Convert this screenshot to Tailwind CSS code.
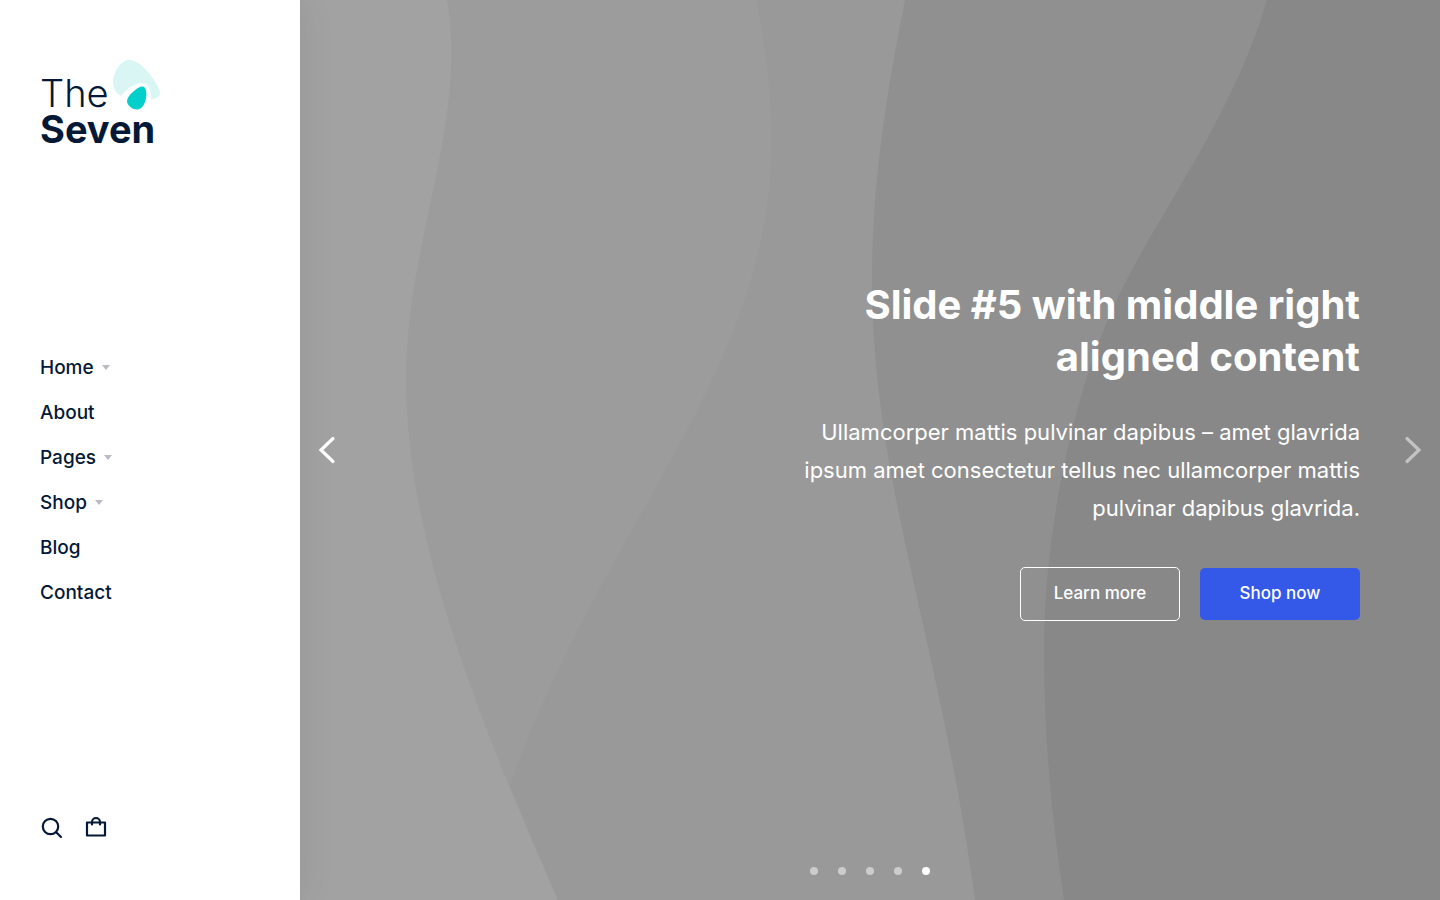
<!DOCTYPE html>
<html lang="en">
<head>
  <meta charset="UTF-8" />
  <meta name="viewport" content="width=device-width, initial-scale=1.0" />
  <title>The Seven</title>
  <script src="https://cdn.jsdelivr.net/npm/@tailwindcss/browser@4"></script>
</head>
<body class="flex min-h-screen bg-white font-['Inter','Liberation_Sans',sans-serif] text-[#051937]">

  <!-- Side header -->
  <header class="relative z-10 flex w-[300px] shrink-0 flex-col justify-between bg-white px-10 pt-[60px] pb-[60px] shadow-[0_0_36px_rgba(0,0,0,0.08)]">
    <a href="#" class="relative block h-[84px] w-[120px] pt-[15px] text-[38px] leading-9">
      <span class="block font-light">The</span>
      <span class="block font-bold">Seven</span>
      <svg class="absolute top-0 right-0 h-[50px] w-12" viewBox="0 0 48 50" aria-hidden="true">
        <path fill="#d9f5f4" d="M9 36C4 34 1 28 1 21C2 11 9 0 17 0C23 0 29 4 35 11C41 18 48 28 48 33C48 37 44 39 39 39C39 32 38 24 31 23C24 22 14 29 9 36Z" />
        <path fill="#05cfca" d="M31 26.5C34 27 35 33 34 38C33 44 30 49 26 49.5C21 50 16 46 15 42C15 38 18 34 22 31C25 28 29 26 31 26.5Z" />
      </svg>
    </a>

    <nav class="text-[19px] leading-[45px] font-medium">
      <ul>
        <li><a href="#" class="flex items-center gap-2">Home
          <svg class="h-[5px] w-2" viewBox="0 0 8 5"><path fill="#b8bcc2" d="M0 0H8L4 5Z" /></svg></a></li>
        <li><a href="#">About</a></li>
        <li><a href="#" class="flex items-center gap-2">Pages
          <svg class="h-[5px] w-2" viewBox="0 0 8 5"><path fill="#b8bcc2" d="M0 0H8L4 5Z" /></svg></a></li>
        <li><a href="#" class="flex items-center gap-2">Shop
          <svg class="h-[5px] w-2" viewBox="0 0 8 5"><path fill="#b8bcc2" d="M0 0H8L4 5Z" /></svg></a></li>
        <li><a href="#">Blog</a></li>
        <li><a href="#">Contact</a></li>
      </ul>
    </nav>

    <div class="flex gap-5">
      <button type="button" aria-label="Search">
        <svg class="size-6" viewBox="0 0 24 24" fill="none" stroke="currentColor" stroke-width="2.2" stroke-linecap="round">
          <circle cx="10.5" cy="10.5" r="7.7" />
          <path d="M16.5 16.5L21 21" />
        </svg>
      </button>
      <a href="#" aria-label="Cart">
        <svg class="size-6" viewBox="0 0 24 24" fill="none" stroke="currentColor" stroke-width="2.2" stroke-linecap="round" stroke-linejoin="round">
          <path d="M3 6.5H21V19.5H3Z" />
          <path d="M8 8.5V6A4 4 0 0 1 16 6V8.5" />
        </svg>
      </a>
    </div>
  </header>

  <!-- Slider -->
  <main class="relative flex grow items-center justify-end overflow-hidden bg-[#a2a2a2] px-20 text-white">
    <svg class="absolute inset-0 h-full w-full" viewBox="0 0 1140 900" preserveAspectRatio="none" aria-hidden="true">
      <path fill="#9c9c9c" d="M147 0C168 125 106 240 106 380C106 535 176 715 258 900H1140V0Z" />
      <path fill="#999999" d="M456 0C475 90 475 170 463 230C430 410 290 560 210 785L258 900H1140V0Z" />
      <path fill="#909090" d="M605 0C586 95 572 185 572 280C572 480 640 640 675 900H1140V0Z" />
      <path fill="#888888" d="M967 0C930 125 854 217 812 310C770 405 744 540 744 650C744 740 752 820 764 900H1140V0Z" />
    </svg>

    <section class="relative flex w-[580px] flex-col items-end text-right">
      <h2 class="text-[40px] leading-[52px] font-bold">Slide #5 with middle right aligned content</h2>
      <p class="mt-[30px] text-[22px] leading-[38px]">Ullamcorper mattis pulvinar dapibus – amet glavrida ipsum amet consectetur tellus nec ullamcorper mattis pulvinar dapibus glavrida.</p>
      <div class="mt-10 flex items-center gap-5 text-[17px] font-medium">
        <button type="button" class="h-[54px] w-40 rounded-[5px] border border-white">Learn more</button>
        <button type="button" class="h-[52px] w-40 rounded-[5px] bg-[#3459e9]">Shop now</button>
      </div>
    </section>

    <button type="button" aria-label="Previous slide" class="absolute top-1/2 left-[18px] -translate-y-1/2">
      <svg class="h-7 w-[18px]" viewBox="0 0 18 28" fill="none" stroke="currentColor" stroke-width="3.2" stroke-linecap="round"><path d="M15 2.5L3 14L15 25.5" /></svg>
    </button>
    <button type="button" aria-label="Next slide" class="absolute top-1/2 right-[18px] -translate-y-1/2 opacity-50">
      <svg class="h-7 w-[18px]" viewBox="0 0 18 28" fill="none" stroke="currentColor" stroke-width="3.2" stroke-linecap="round"><path d="M3 2.5L15 14L3 25.5" /></svg>
    </button>

    <div class="absolute bottom-[25px] left-1/2 flex -translate-x-1/2 gap-5">
      <button type="button" aria-label="Slide 1" class="size-2 rounded-full bg-white/50"></button>
      <button type="button" aria-label="Slide 2" class="size-2 rounded-full bg-white/50"></button>
      <button type="button" aria-label="Slide 3" class="size-2 rounded-full bg-white/50"></button>
      <button type="button" aria-label="Slide 4" class="size-2 rounded-full bg-white/50"></button>
      <button type="button" aria-label="Slide 5" class="size-2 rounded-full bg-white"></button>
    </div>
  </main>

</body>
</html>
